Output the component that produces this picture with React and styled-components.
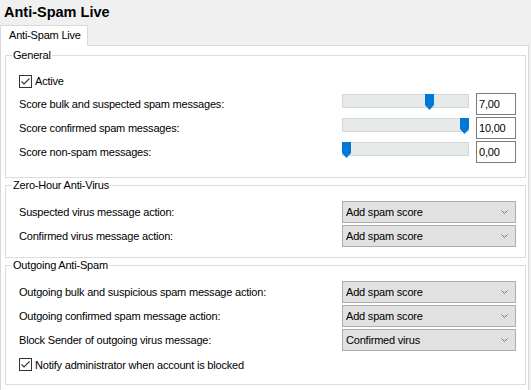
import styled, { createGlobalStyle } from 'styled-components'

const GlobalStyle = createGlobalStyle`
    html, body {
        margin: 0;
        padding: 0;
        background: #f0f0f0;
    }

    body {
        font-family: "Liberation Sans", Arial, sans-serif;
        font-size: 11px;
        letter-spacing: -0.2px;
        color: #000;
    }
`

const Window = styled.div`
    width: 531px;
    height: 390px;
    overflow: hidden;
    background: #f0f0f0;
`

const Title = styled.h1`
    margin: 0;
    height: 24px;
    padding-left: 4px;
    font-size: 14.5px;
    line-height: 24px;
    font-weight: bold;
    letter-spacing: 0;
`

const TabStrip = styled.div`
    display: flex;
    height: 21px;
    padding-top: 1px;
    box-sizing: border-box;
`

const Tab = styled.div`
    position: relative;
    z-index: 1;
    width: 88px;
    height: 21px;
    box-sizing: border-box;
    padding-left: 8px;
    border: 1px solid #d9d9d9;
    border-bottom: none;
    background: #fff;
    line-height: 19px;
`

const Panel = styled.div`
    margin-right: 2px;
    padding: 0 2px 8px 4px;
    border: 1px solid #d9d9d9;
    border-bottom: none;
    background: #fff;
    min-height: 345px;
`

const Group = styled.fieldset`
    margin: ${({ $top }) => $top}px 0 0 0;
    padding: 0;
    border: 1px solid #dcdcdc;
    min-width: 0;
`

const Legend = styled.legend`
    margin-left: 6px;
    padding: 0 1px;
    line-height: 14px;
`

const GroupBody = styled.div`
    display: flex;
    flex-direction: column;
    padding: ${({ $top }) => $top}px 9px ${({ $bottom }) => $bottom}px 13px;
`

const Row = styled.div`
    display: flex;
    align-items: center;
    height: ${({ $h }) => $h || 24}px;
`

const Label = styled.span`
    flex: 1;
    white-space: nowrap;
`

const CheckLabel = styled.label`
    display: flex;
    align-items: center;
    gap: 3px;
`

const Box = styled.span`
    display: flex;
    width: 13px;
    height: 13px;
    box-sizing: border-box;
    border: 1px solid #333;
    background: #fff;
`

const Track = styled.div`
    position: relative;
    align-self: flex-start;
    margin-top: 2px;
    width: 127px;
    height: 14px;
    box-sizing: border-box;
    border: 1px solid #d6d6d6;
    background: #e7eaea;
`

const Thumb = styled.svg`
    position: absolute;
    top: -1px;
    width: 9px;
    height: 16px;
`

const NumberBox = styled.div`
    margin-left: 7px;
    width: 40px;
    height: 22px;
    box-sizing: border-box;
    padding-left: 2px;
    border: 1px solid #7a7a7a;
    background: #fff;
    line-height: 20px;
`

const Select = styled.div`
    display: flex;
    align-items: center;
    justify-content: space-between;
    width: 174px;
    height: 22px;
    box-sizing: border-box;
    padding: 0 7px 0 3px;
    border: 1px solid #adadad;
    background: #e1e1e1;
`

function Checkbox({ children }) {
    return (
        <CheckLabel>
            <Box>
                <svg width='11' height='11' viewBox='0 0 11 11'>
                    <polyline points='1.5,5.5 4,8 9.5,2.5' fill='none' stroke='#333' strokeWidth='1.1' />
                </svg>
            </Box>
            {children}
        </CheckLabel>
    )
}

function Slider({ value, max }) {
    const left = Math.round((value / max) * 118)
    return (
        <Track>
            <Thumb style={{ left: left - 1 }} viewBox='0 0 9 16'>
                <polygon points='0,0 9,0 9,11 4.5,16 0,11' fill='#0078d7' />
            </Thumb>
        </Track>
    )
}

function Dropdown({ value }) {
    return (
        <Select>
            <span>{value}</span>
            <svg width='7' height='4' viewBox='0 0 7 4'>
                <polyline points='0.5,0.5 3.5,3.5 6.5,0.5' fill='none' stroke='#666' strokeWidth='0.9' />
            </svg>
        </Select>
    )
}

const scores = [
    { txt: 'Score bulk and suspected spam messages:', value: 7 },
    { txt: 'Score confirmed spam messages:', value: 10 },
    { txt: 'Score non-spam messages:', value: 0 },
]

const outgoing = [
    { txt: 'Outgoing bulk and suspicious spam message action:', value: 'Add spam score' },
    { txt: 'Outgoing confirmed spam message action:', value: 'Add spam score' },
    { txt: 'Block Sender of outgoing virus message:', value: 'Confirmed virus' },
]

function App() {
    return (
        <Window>
            <GlobalStyle />
            <Title>Anti-Spam Live</Title>
            <TabStrip>
                <Tab>Anti-Spam Live</Tab>
            </TabStrip>
            <Panel>
                <Group $top={2}>
                    <Legend>General</Legend>
                    <GroupBody $top={8} $bottom={13}>
                        <Row $h={22}>
                            <Checkbox>Active</Checkbox>
                        </Row>
                        {scores.map((s) => (
                            <Row key={s.txt}>
                                <Label>{s.txt}</Label>
                                <Slider value={s.value} max={10} />
                                <NumberBox>{s.value.toFixed(2).replace('.', ',')}</NumberBox>
                            </Row>
                        ))}
                    </GroupBody>
                </Group>

                <Group $top={0}>
                    <Legend>Zero-Hour Anti-Virus</Legend>
                    <GroupBody $top={8} $bottom={9}>
                        <Row>
                            <Label>Suspected virus message action:</Label>
                            <Dropdown value='Add spam score' />
                        </Row>
                        <Row>
                            <Label>Confirmed virus message action:</Label>
                            <Dropdown value='Add spam score' />
                        </Row>
                    </GroupBody>
                </Group>

                <Group $top={0}>
                    <Legend>Outgoing Anti-Spam</Legend>
                    <GroupBody $top={8} $bottom={7}>
                        {outgoing.map((o) => (
                            <Row key={o.txt}>
                                <Label>{o.txt}</Label>
                                <Dropdown value={o.value} />
                            </Row>
                        ))}
                        <Row $h={25}>
                            <Checkbox>Notify administrator when account is blocked</Checkbox>
                        </Row>
                    </GroupBody>
                </Group>
            </Panel>
        </Window>
    )
}

export default App
